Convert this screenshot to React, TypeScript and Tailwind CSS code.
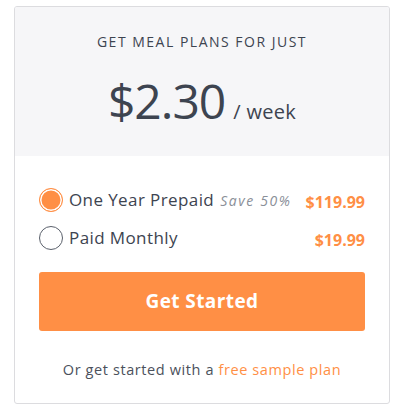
import { useState } from 'react';

const plans = [
  { id: 'year', label: 'One Year Prepaid', note: 'Save 50%', price: '$119.99' },
  { id: 'month', label: 'Paid Monthly', note: '', price: '$19.99' },
];

export default function App() {
  const [plan, setPlan] = useState('year');

  return (
    <div className="w-[404px] h-[410px] bg-white pt-[6px] px-[14px] font-['Open_Sans','Lato',sans-serif]">
      <div className="w-[376px] h-[398px] border border-[#dcdcdf] rounded-[3px] overflow-hidden flex flex-col">
        <div className="bg-[#f6f6f8] h-[149px] flex flex-col items-center pt-[24px]">
          <p className="text-[14px] tracking-[1.5px] text-[#3d4450] uppercase">Get meal plans for just</p>
          <p className="mt-[25px] text-[#3d4450] flex items-baseline">
            <span className="text-[48px] leading-none tracking-[-1px]">$2.30</span>
            <span className="text-[20px] ml-[8px] tracking-[0.3px]">/ week</span>
          </p>
        </div>
        <div className="px-[24px] pt-[25px] flex flex-col">
          {plans.map(p => (
            <label key={p.id} className="flex items-center h-[38px] cursor-pointer" onClick={() => setPlan(p.id)}>
              {plan === p.id ? (
                <span className="w-[24px] h-[24px] rounded-full bg-[#ff8f45] border border-[#ff8f45] shadow-[inset_0_0_0_1.5px_#fff] shrink-0" />
              ) : (
                <span className="w-[24px] h-[24px] rounded-full border border-[#5a606b] bg-white shrink-0" />
              )}
              <span className="ml-[6px] text-[17px] text-[#3d4450] tracking-[0.4px]">{p.label}</span>
              {p.note && <span className="ml-[6px] text-[14px] italic text-[#8a8f98] tracking-[1.6px]">{p.note}</span>}
              <span className="ml-auto mt-[4px] text-[16px] font-bold text-[#ff8f45]">{p.price}</span>
            </label>
          ))}
          <button className="mt-[15px] h-[59px] w-full rounded-[3px] bg-[#ff8f45] text-white text-[19px] font-bold tracking-[0.4px]">
            Get Started
          </button>
          <p className="mt-[28px] text-center text-[14.5px] text-[#4b515c] tracking-[0.6px]">
            Or get started with a <span className="text-[#ff8f45]">free sample plan</span>
          </p>
        </div>
      </div>
    </div>
  );
}
